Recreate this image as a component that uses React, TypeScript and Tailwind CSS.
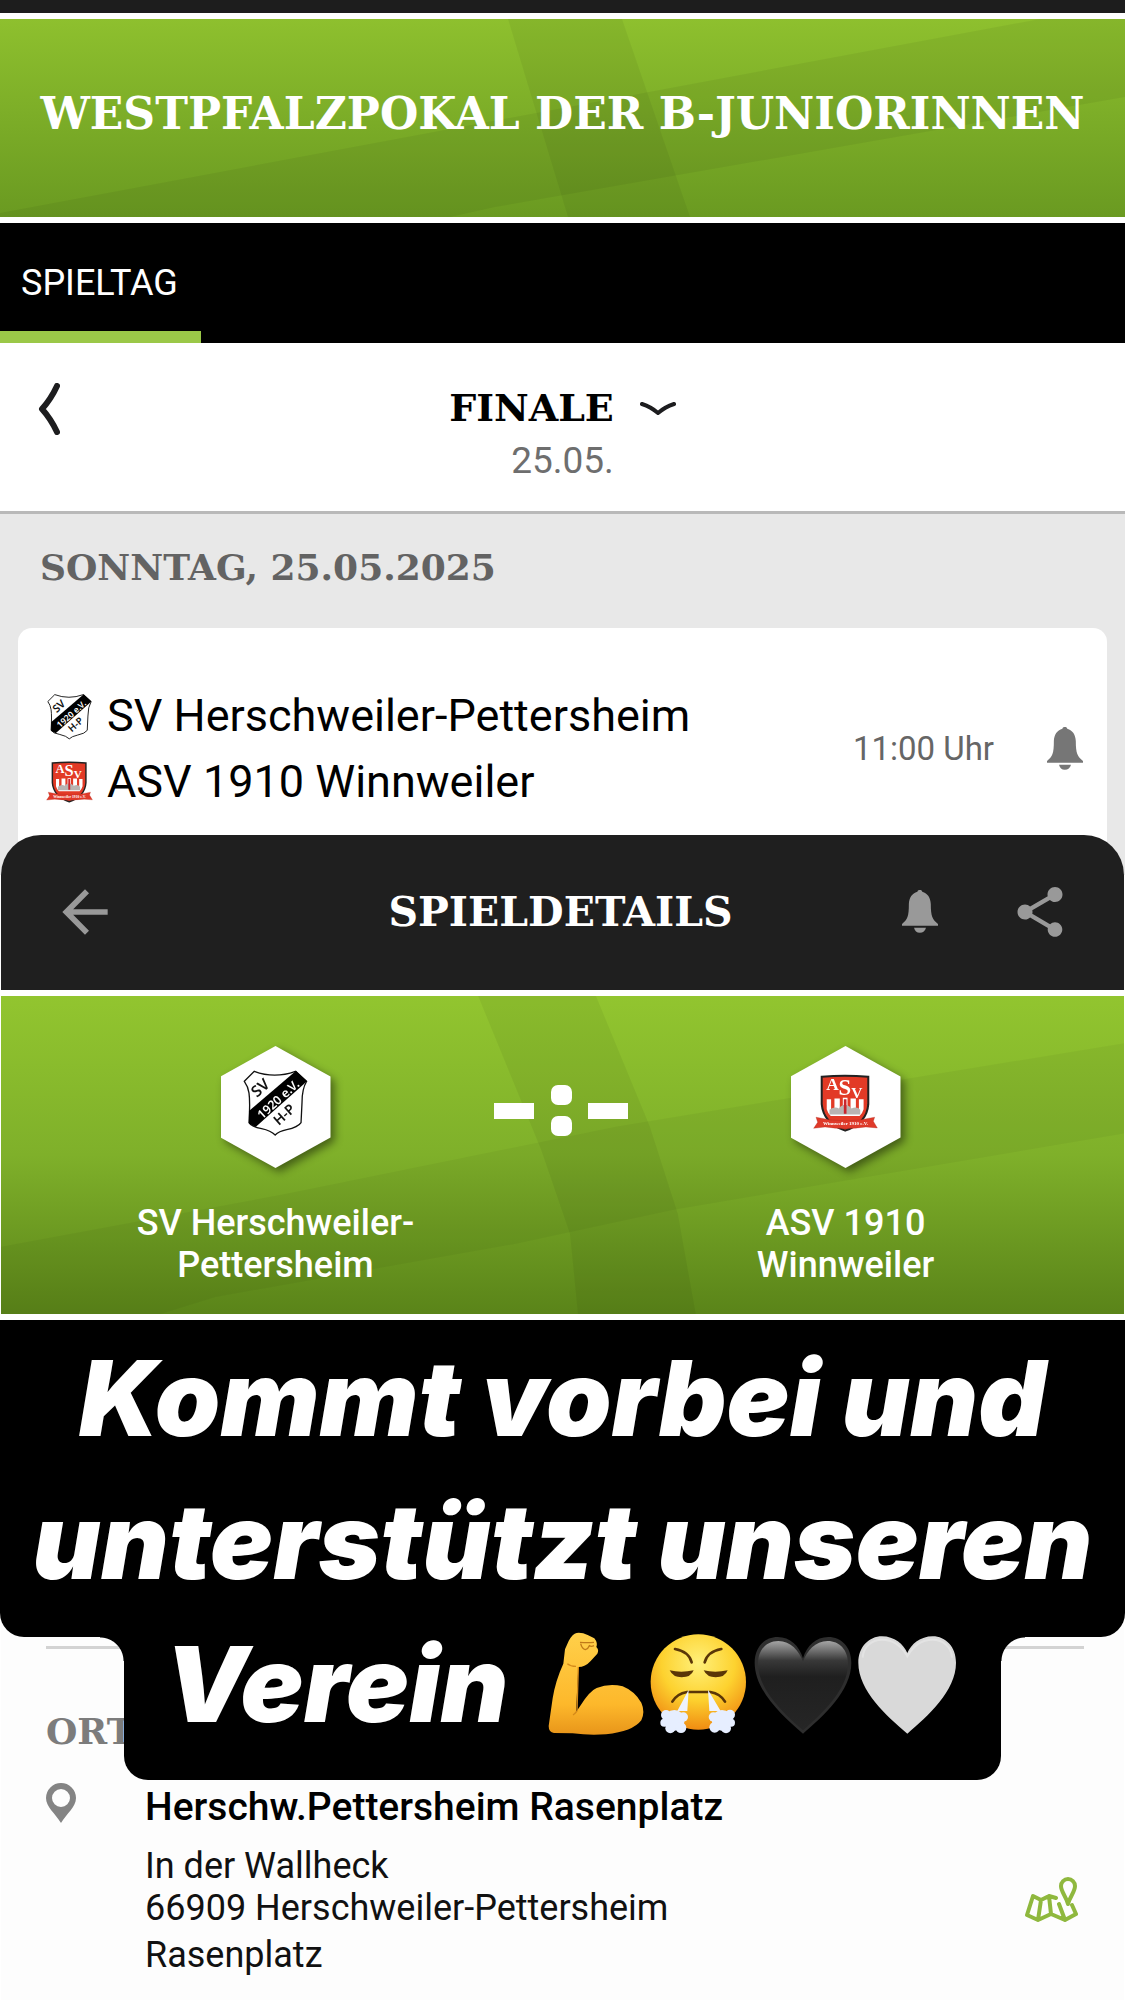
import { MdArrowBack, MdShare } from "react-icons/md";

const ADDRESS = ["In der Wallheck", "66909 Herschweiler-Pettersheim"];

function Bell({ className }: { className: string }) {
  return (
    <svg viewBox="0 0 105 126" className={className} fill="currentColor" aria-hidden="true">
      <path d="M52 0c4 0 7 2 7 5 16 5 24 17 25 36 0 36 5 46 21 58v5H0v-5c16-12 20-22 20-58C21 22 29 10 45 5c0-3 3-5 7-5z" />
      <path d="M35 110h35c-2 9-9 15-18 15s-15-6-17-15z" />
    </svg>
  );
}

function CrestHerschweiler({ className }: { className: string }) {
  return (
    <svg viewBox="180 150 196 204" className={className} role="img" aria-label="SV Herschweiler-Pettersheim">
      <path
        d="M184 187 214 157Q275 180 338 157L372 187Q358 210 358 250L355 312Q346 326 312 333 288 338 277 349 264 336 236 330 206 325 198 312 202 250 198 222 195 202 184 187Z"
        fill="#fff"
        stroke="#111"
        strokeWidth="4"
      />
      <path d="M340 155 373 187 218 325 198 314V277Z" fill="#000" />
      <g fontFamily="'Noto Sans', sans-serif" fontWeight="600" textAnchor="middle">
        <text x="243" y="219" fontSize="47" fill="#111" transform="rotate(-42 243 219)">SV</text>
        <text x="295" y="251" fontSize="37" fill="#fff" transform="rotate(-42 295 251)">1920 e.V.</text>
        <text x="314" y="298" fontSize="42" fill="#111" transform="rotate(-42 314 298)">H-P</text>
      </g>
    </svg>
  );
}

function CrestWinnweiler({ className }: { className: string }) {
  return (
    <svg viewBox="207 165 194 174" className={className} role="img" aria-label="ASV 1910 Winnweiler">
      <path d="M233 173Q302 168 372 173V255Q368 312 303 334 238 312 233 255Z" fill="#e23a26" stroke="#222" strokeWidth="6" />
      <path d="M248 240h13v30h10v-32h16v30h9v-32h14v32h9v-30h16v32h9v-30h14v30q-4 14-12 20H260q-9-8-12-20Z" fill="#fff" />
      <path d="M256 272q16-12 28-4 18-22 38 0 16-8 26 4v14h-92z" fill="#b9b4b2" />
      <path d="M299 240h8v44h-8zM296 316h14l-7 13z" fill="#c9252d" />
      <g fontFamily="'Liberation Serif', serif" fontWeight="700" fill="#fff" textAnchor="middle">
        <text x="265" y="214" fontSize="52">A</text>
        <text x="302" y="229" fontSize="68">S</text>
        <text x="338" y="236" fontSize="46">V</text>
      </g>
      <path d="M216 294Q303 316 391 294l-4 12 12 20-34-3Q303 332 243 323l-34 4 12-18Z" fill="#df3a2a" stroke="#b02a1e" strokeWidth="1" />
      <text x="304" y="318" fontSize="15" fontFamily="'Liberation Serif', serif" fontWeight="700" fill="#fff" textAnchor="middle">
        Winnweiler 1910 e.V.
      </text>
    </svg>
  );
}

function Emojis() {
  return (
    <div className="flex" role="img" aria-label="💪😤🖤🤍">
      <svg viewBox="57 63 312 312" className="size-[104px]">
        <defs>
          <linearGradient id="skin" x1="0" y1="0" x2="0" y2="1">
            <stop offset="0" stopColor="#ffd04a" />
            <stop offset="0.7" stopColor="#fdb82b" />
            <stop offset="1" stopColor="#e8951a" />
          </linearGradient>
        </defs>
        <path
          d="M152 66Q140 68 128 90L117 115 112 158Q88 210 80 262L68 345Q68 364 84 366L140 367Q190 374 240 370 320 362 346 328 358 302 346 275 325 240 290 226 250 216 212 231 190 240 162 286L150 303 157 168Q178 168 194 150L214 128Q220 116 211 108 216 96 205 82L185 72Q168 64 152 66Z"
          fill="url(#skin)"
        />
        <path d="M162 94q22 2 42 0M164 98q4 16 14 18 8-2 12-12 6 4 14 0" fill="none" stroke="#c07a18" strokeWidth="4" />
        <path d="M157 168 153 300q-8 10-12 12M150 166q-16 0-26-8" fill="none" stroke="#d58a1a" strokeWidth="4" />
      </svg>
      <svg viewBox="369 63 312 312" className="size-[104px]">
        <defs>
          <radialGradient id="face" cx="0.5" cy="0.3" r="0.7">
            <stop offset="0" stopColor="#fff07a" />
            <stop offset="0.55" stopColor="#fdd22f" />
            <stop offset="1" stopColor="#f08c12" />
          </radialGradient>
        </defs>
        <circle cx="517" cy="213" r="143" fill="url(#face)" />
        <path d="M447 114q42 8 50 40M586 114q-42 8-50 40M439 272q14-24 44-29h70q30 5 44 29" fill="none" stroke="#5a3607" strokeWidth="8" strokeLinecap="round" />
        <path d="M431 178q34 8 72 0-8 21-36 21-26 0-36-21zM533 178q34 8 72 0-8 21-36 21-26 0-36-21z" fill="#5a3607" />
        <path d="M488 236 484 300H454ZM546 236 550 300H584Z" fill="#eef3ff" />
        <g fill="#e6eeff">
          <circle cx="445" cy="328" r="31" />
          <circle cx="420" cy="312" r="15" />
          <circle cx="415" cy="335" r="12" />
          <circle cx="433" cy="352" r="15" />
          <circle cx="465" cy="350" r="16" />
          <circle cx="472" cy="318" r="14" />
          <circle cx="588" cy="328" r="31" />
          <circle cx="562" cy="318" r="14" />
          <circle cx="566" cy="349" r="16" />
          <circle cx="600" cy="352" r="15" />
          <circle cx="615" cy="335" r="12" />
          <circle cx="612" cy="311" r="15" />
        </g>
      </svg>
      <svg viewBox="681 63 312 312" className="size-[104px]">
        <defs>
          <linearGradient id="black-heart" x1="0" y1="0" x2="0" y2="1">
            <stop offset="0" stopColor="#a5a5a5" />
            <stop offset="0.22" stopColor="#383838" />
            <stop offset="0.4" stopColor="#1f1f1f" />
            <stop offset="1" stopColor="#262626" />
          </linearGradient>
        </defs>
        <path d="M831 368C770 315 686 240 686 155 686 108 716 78 755 78 792 78 820 104 831 142 842 104 870 78 907 78 946 78 976 108 976 155 976 240 892 315 831 368Z" fill="#2e2e2e" />
        <path d="M831 358C774 308 696 236 696 158 696 116 722 90 757 90 794 90 820 120 831 152 842 120 868 90 905 90 940 90 966 116 966 158 966 236 888 308 831 358Z" fill="url(#black-heart)" />
      </svg>
      <svg viewBox="993 63 312 312" className="size-[104px]">
        <path d="M1144 368C1083 315 997 240 997 155 997 108 1029 76 1068 76 1105 76 1133 100 1144 126 1155 100 1183 76 1220 76 1259 76 1290 108 1290 155 1290 240 1205 315 1144 368Z" fill="#d9d9d9" />
        <path d="M1010 140c2-34 28-54 58-54 28 0 56 14 76 50 20-36 48-50 76-50 30 0 56 20 58 54" fill="none" stroke="#e3e3e3" strokeWidth="6" />
      </svg>
    </div>
  );
}

function Score() {
  return (
    <svg viewBox="0 0 134 52" className="w-[134px]" fill="#fff" role="img" aria-label="- : -">
      <rect x="0" y="18" width="40" height="16" />
      <rect x="57" y="0" width="21" height="20" rx="7" />
      <rect x="57" y="31" width="21" height="20" rx="7" />
      <rect x="94" y="18" width="40" height="16" />
    </svg>
  );
}

function Hexagon({ children }: { children: React.ReactNode }) {
  return (
    <div className="drop-shadow-[4px_4px_4px_rgba(0,0,0,0.45)]">
      <div className="flex h-[122px] w-[110px] items-center justify-center bg-white pb-2 [clip-path:polygon(50%_0,100%_25%,100%_75%,50%_100%,0_75%,0_25%)]">
        {children}
      </div>
    </div>
  );
}

export default function App() {
  return (
    <div className="bg-white font-[Roboto,sans-serif] text-black">
      <div className="h-[13px] bg-[#1d1d1d]" />

      {/* Competition banner */}
      <header className="relative my-[6px] flex h-[198px] items-center justify-center overflow-hidden bg-linear-to-b from-[#8ec02e] to-[#6a9a21]">
        <svg viewBox="0 0 1125 198" preserveAspectRatio="none" className="absolute inset-0 size-full" aria-hidden="true">
          <path d="M508 0H622L690 198H568Z" fillOpacity="0.05" />
          <path d="M0 194 1040 0H1125V78L495 188 450 198H0Z" fillOpacity="0.05" />
        </svg>
        <h1 className="relative pb-2 font-['DejaVu_Serif',serif] text-[44px] leading-[48px] font-bold whitespace-nowrap text-white">
          WESTPFALZPOKAL DER B-JUNIORINNEN
        </h1>
      </header>

      <nav className="flex h-[120px] bg-black">
        <a href="#spieltag" className="w-[201px] border-b-[12px] border-[#9bc848] pl-[21px] text-[36px] leading-[120px] text-white">
          SPIELTAG
        </a>
      </nav>

      {/* Round picker */}
      <section className="grid grid-cols-[1fr_auto_1fr] border-b-[3px] border-[#b9b9b9] pt-10 pb-[22px]">
        <button type="button" aria-label="Zurück" className="ml-[38px] h-[50px] w-[22px]">
          <svg viewBox="0 0 22 52" className="h-[52px] w-[22px]" fill="none" stroke="#1d1d1f" strokeWidth="6" strokeLinecap="round" strokeLinejoin="round">
            <path d="M19 3 Q13 16 4 26 Q13 36 19 49" />
          </svg>
        </button>
        <div className="text-center">
          <button type="button" className="flex items-center gap-[26px] font-['DejaVu_Serif',serif] text-[38px] leading-[50px] font-bold">
            FINALE
            <svg viewBox="0 0 36 16" className="w-9" fill="none" stroke="#1d1d1f" strokeWidth="4" strokeLinecap="round" strokeLinejoin="round" aria-hidden="true">
              <path d="M2 4 Q11 7 18 13 Q25 7 34 4" />
            </svg>
          </button>
          <p className="text-[37px] leading-[56px] text-[#6e6e6e]">25.05.</p>
        </div>
      </section>

      {/* Matches of the day */}
      <section className="bg-[#e8e8e8] px-[18px] pt-[29px]">
        <h2 className="ml-[22px] font-['DejaVu_Serif',serif] text-[36px] leading-[48px] font-bold text-[#636363]">SONNTAG, 25.05.2025</h2>
        <div className="mt-[37px] flex items-center rounded-t-[14px] bg-white pt-[55px] pr-6 pb-[60px] pl-7 text-[45px] leading-[66px]">
          <div className="flex-1">
            <div className="flex items-center gap-[14px]">
              <CrestHerschweiler className="h-[47px] w-[47px]" />
              SV Herschweiler-Pettersheim
            </div>
            <div className="flex items-center gap-[14px]">
              <CrestWinnweiler className="h-[42px] w-[47px]" />
              ASV 1910 Winnweiler
            </div>
          </div>
          <span className="mr-[53px] text-[33px] text-[#666]">11:00 Uhr</span>
          <button type="button" aria-label="Benachrichtigung" className="text-[#767676]">
            <Bell className="w-9" />
          </button>
        </div>
      </section>

      {/* Match details sheet */}
      <main className="relative mx-px -mt-10">
        <div className="grid h-[155px] grid-cols-[1fr_auto_1fr] items-center rounded-t-[40px] bg-[#1f1f1f] pr-[54px] pb-[2px] pl-[50px] text-[#999]">
          <button type="button" aria-label="Zurück" className="justify-self-start">
            <MdArrowBack className="size-[68px]" />
          </button>
          <h2 className="font-['DejaVu_Serif',serif] text-[41px] leading-[48px] font-bold text-white">SPIELDETAILS</h2>
          <div className="flex items-center gap-[72px] justify-self-end">
            <button type="button" aria-label="Benachrichtigung">
              <Bell className="w-9" />
            </button>
            <button type="button" aria-label="Teilen">
              <MdShare className="size-[60px]" />
            </button>
          </div>
        </div>

        <div className="relative my-[6px] overflow-hidden bg-linear-to-b from-[#92c52f] via-[#7fb02a] to-[#5a8419]">
          <svg viewBox="0 0 1125 317" preserveAspectRatio="none" className="absolute inset-0 size-full" aria-hidden="true">
            <path d="M478 0H596L650 130 678 217 696 317H578L570 237 541 153Z" fillOpacity="0.05" />
            <path d="M0 250 287 197 617 130 1125 47V137L674 213 516 247 215 300 160 317H0Z" fillOpacity="0.04" />
          </svg>
          <div className="relative grid grid-cols-3 pt-[50px] pr-[136px] pb-7 pl-[132px] text-center text-[36px] leading-[42px] font-medium text-white">
            <div className="flex flex-col items-center gap-[34px]">
              <Hexagon>
                <CrestHerschweiler className="w-[65px]" />
              </Hexagon>
              <p>
                SV Herschweiler-
                <br />
                Pettersheim
              </p>
            </div>
            <div className="flex h-[130px] items-center justify-center">
              <Score />
            </div>
            <div className="flex flex-col items-center gap-[34px]">
              <Hexagon>
                <CrestWinnweiler className="w-[65px]" />
              </Hexagon>
              <p>
                ASV 1910
                <br />
                Winnweiler
              </p>
            </div>
          </div>
        </div>

        <section className="relative bg-[#fdfdfd] pt-[326px] pr-10 pb-[25px] pl-[45px]">
          <hr className="h-[3px] border-0 bg-[#d3d3d3]" />
          <h3 className="mt-[58px] font-['DejaVu_Serif',serif] text-[36px] leading-[48px] font-bold text-[#7c7c7c]">ORT</h3>
          <div className="mt-7 flex">
            <svg viewBox="0 0 30 40" className="h-10 w-[30px]" fill="#848484" aria-hidden="true">
              <path fillRule="evenodd" d="M15 0a15 15 0 0 1 15 15c0 9-9 15-15 25C9 30 0 24 0 15A15 15 0 0 1 15 0Zm0 6a9 9 0 1 0 0 18 9 9 0 0 0 0-18Z" />
            </svg>
            <div className="ml-[69px] flex-1 text-[36px] leading-[42px] text-[#111]">
              <h4 className="mb-[14px] text-[39px] leading-[48px] font-medium text-black">Herschw.Pettersheim Rasenplatz</h4>
              {ADDRESS.map((line) => (
                <p key={line}>{line}</p>
              ))}
              <p className="mt-[5px]">Rasenplatz</p>
            </div>
            <a href="#karte" aria-label="Karte" className="mt-[94px] mr-[5px]">
              <svg viewBox="0 0 54 46" className="w-[54px]" fill="none" stroke="#8fb83e" strokeWidth="4" strokeLinejoin="round" strokeLinecap="round">
                <path d="M31 21 24 19 16 23 8 19 2 38 13 43 26 37 40 43 51 37 47 28M16 23 13 43M24 19 26 37M34 27 40 43" />
                <path d="M43 27C41 19 36 15 36 9a7 7 0 0 1 14 0c0 6-5 10-7 18Z" />
              </svg>
            </a>
          </div>

          {/* Story caption */}
          <div className="absolute -inset-x-px top-0 text-center font-[Inter,sans-serif] text-[105px] font-black text-white italic">
            <div className="rounded-b-[24px] bg-black pt-[6px] pb-[25px] leading-[143px] whitespace-nowrap">
              Kommt vorbei und
              <br />
              unterstützt unseren
            </div>
            <div className="flex justify-center">
              <span className="size-6 bg-[radial-gradient(circle_at_bottom_left,transparent_23px,black_24px)]" />
              <div className="flex h-[143px] items-start gap-9 rounded-b-[24px] bg-black px-10 leading-[93px]">
                Verein
                <div className="flex h-[93px] items-center">
                  <Emojis />
                </div>
              </div>
              <span className="size-6 bg-[radial-gradient(circle_at_bottom_right,transparent_23px,black_24px)]" />
            </div>
          </div>
        </section>
      </main>
    </div>
  );
}
